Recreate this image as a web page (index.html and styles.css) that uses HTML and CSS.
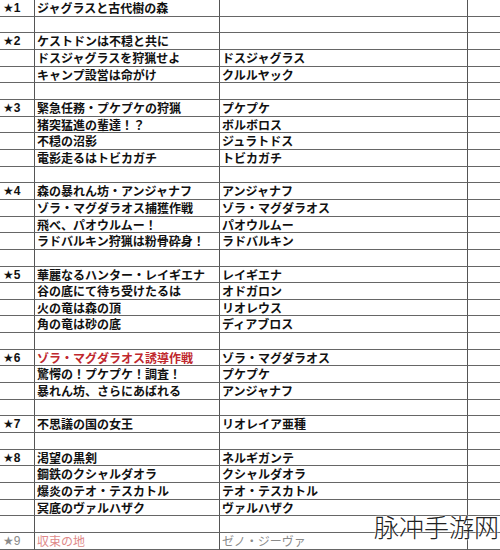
FILE: index.html
```html
<!DOCTYPE html>
<html lang="ja">
<head>
<meta charset="utf-8">
<link rel="stylesheet" href="styles.css">
</head>
<body>
<div class="sheet">
  <div class="c s">★1</div><div class="c">ジャグラスと古代樹の森</div><div class="c"></div><div class="c e"></div>
  <div class="c s"></div><div class="c"></div><div class="c"></div><div class="c e"></div>
  <div class="c s">★2</div><div class="c">ケストドンは不穏と共に</div><div class="c"></div><div class="c e"></div>
  <div class="c s"></div><div class="c">ドスジャグラスを狩猟せよ</div><div class="c">ドスジャグラス</div><div class="c e"></div>
  <div class="c s"></div><div class="c">キャンプ設営は命がけ</div><div class="c">クルルヤック</div><div class="c e"></div>
  <div class="c s"></div><div class="c"></div><div class="c"></div><div class="c e"></div>
  <div class="c s">★3</div><div class="c">緊急任務・プケプケの狩猟</div><div class="c">プケプケ</div><div class="c e"></div>
  <div class="c s"></div><div class="c">猪突猛進の輩達！？</div><div class="c">ボルボロス</div><div class="c e"></div>
  <div class="c s"></div><div class="c">不穏の沼影</div><div class="c">ジュラトドス</div><div class="c e"></div>
  <div class="c s"></div><div class="c">電影走るはトビカガチ</div><div class="c">トビカガチ</div><div class="c e"></div>
  <div class="c s"></div><div class="c"></div><div class="c"></div><div class="c e"></div>
  <div class="c s">★4</div><div class="c">森の暴れん坊・アンジャナフ</div><div class="c">アンジャナフ</div><div class="c e"></div>
  <div class="c s"></div><div class="c">ゾラ・マグダラオス捕獲作戦</div><div class="c">ゾラ・マグダラオス</div><div class="c e"></div>
  <div class="c s"></div><div class="c">飛べ、パオウルムー！</div><div class="c">パオウルムー</div><div class="c e"></div>
  <div class="c s"></div><div class="c">ラドバルキン狩猟は粉骨砕身！</div><div class="c">ラドバルキン</div><div class="c e"></div>
  <div class="c s"></div><div class="c"></div><div class="c"></div><div class="c e"></div>
  <div class="c s">★5</div><div class="c">華麗なるハンター・レイギエナ</div><div class="c">レイギエナ</div><div class="c e"></div>
  <div class="c s"></div><div class="c">谷の底にて待ち受けたるは</div><div class="c">オドガロン</div><div class="c e"></div>
  <div class="c s"></div><div class="c">火の竜は森の頂</div><div class="c">リオレウス</div><div class="c e"></div>
  <div class="c s"></div><div class="c">角の竜は砂の底</div><div class="c">ディアブロス</div><div class="c e"></div>
  <div class="c s"></div><div class="c"></div><div class="c"></div><div class="c e"></div>
  <div class="c s">★6</div><div class="c red">ゾラ・マグダラオス誘導作戦</div><div class="c">ゾラ・マグダラオス</div><div class="c e"></div>
  <div class="c s"></div><div class="c">驚愕の！プケプケ！調査！</div><div class="c">プケプケ</div><div class="c e"></div>
  <div class="c s"></div><div class="c">暴れん坊、さらにあばれる</div><div class="c">アンジャナフ</div><div class="c e"></div>
  <div class="c s"></div><div class="c"></div><div class="c"></div><div class="c e"></div>
  <div class="c s">★7</div><div class="c">不思議の国の女王</div><div class="c">リオレイア亜種</div><div class="c e"></div>
  <div class="c s"></div><div class="c"></div><div class="c"></div><div class="c e"></div>
  <div class="c s">★8</div><div class="c">渇望の黒剣</div><div class="c">ネルギガンテ</div><div class="c e"></div>
  <div class="c s"></div><div class="c">鋼鉄のクシャルダオラ</div><div class="c">クシャルダオラ</div><div class="c e"></div>
  <div class="c s"></div><div class="c">爆炎のテオ・テスカトル</div><div class="c">テオ・テスカトル</div><div class="c e"></div>
  <div class="c s"></div><div class="c">冥底のヴァルハザク</div><div class="c">ヴァルハザク</div><div class="c e"></div>
  <div class="c s"></div><div class="c"></div><div class="c"></div><div class="c e"></div>
  <div class="c s faded">★9</div><div class="c pink">収束の地</div><div class="c faded">ゼノ・ジーヴァ</div><div class="c e"></div>
</div>
<div class="watermark">脉冲手游网</div>
</body>
</html>
```

FILE: styles.css
```css
html, body {
  margin: 0;
  padding: 0;
  background: #fff;
}
body {
  width: 500px;
  height: 550px;
  overflow: hidden;
  position: relative;
  font-family: "Noto Sans CJK JP", "Noto Sans", sans-serif;
}
.sheet {
  display: grid;
  grid-template-columns: 35px 185px 248px 32px;
  grid-auto-rows: calc(550px / 33);
}
.c {
  box-sizing: border-box;
  border-right: 1px solid #555;
  border-bottom: 1px solid #666;
  font-size: 12px;
  font-weight: 700;
  color: #111;
  line-height: 16px;
  padding-left: 2px;
  white-space: nowrap;
  overflow: hidden;
}
.s {
  padding-left: 3px;
  font-family: "Liberation Sans", "DejaVu Sans", sans-serif;
  font-weight: 700;
  font-size: 12px;
}
.e {
  border-right: none;
}
.red {
  color: #c0272d;
}
.pink {
  color: #e08a8a;
  font-weight: 400;
}
.faded {
  color: #8a8a8a;
  font-weight: 400;
}
.watermark {
  position: absolute;
  left: 374px;
  top: 510px;
  font-family: "Noto Sans CJK SC", sans-serif;
  font-weight: 300;
  font-size: 25px;
  line-height: 32px;
  color: #222;
  text-shadow: 0 0 2px #fff, 0 0 2px #fff;
  white-space: nowrap;
}
```
